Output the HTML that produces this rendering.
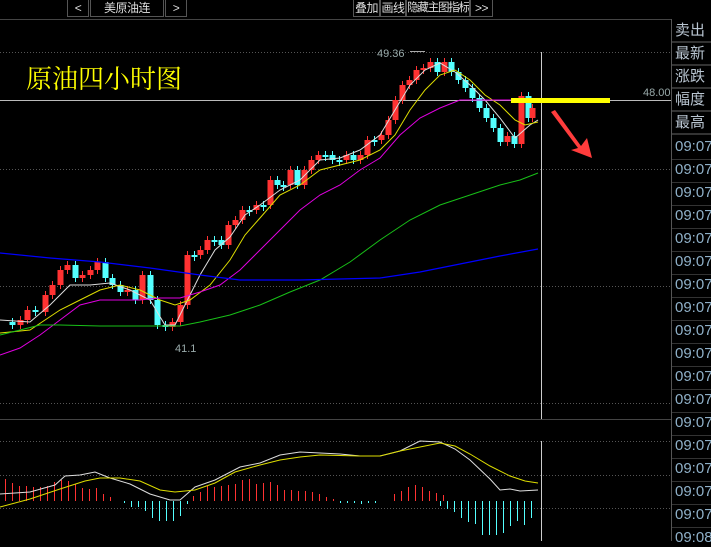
<!DOCTYPE html>
<html><head><meta charset="utf-8"><style>
body{margin:0;width:711px;height:541px;background:#000;overflow:hidden;position:relative;font-family:"Liberation Sans","Noto Sans CJK SC",sans-serif}
.btn{position:absolute;top:0;height:17px;border:1px solid #555;border-top:none;color:#ddd;font-size:12px;line-height:16px;text-align:center;box-sizing:border-box;white-space:nowrap;overflow:hidden;letter-spacing:-0.5px}
.lab{position:absolute;left:672px;width:39px;height:23px;border-bottom:2px solid #333;color:#b8c4d0;font-size:15px;line-height:22px;padding-left:3px;box-sizing:border-box}
.tm{position:absolute;left:675px;color:#8fb0c8;font-size:15px;line-height:18px}
</style></head><body>
<div class="btn" style="left:67px;width:22px">&lt;</div>
<div class="btn" style="left:90px;width:74px">美原油连</div>
<div class="btn" style="left:165px;width:22px">&gt;</div>
<div class="btn" style="left:353px;width:27px">叠加</div>
<div class="btn" style="left:380px;width:26px">画线</div>
<div class="btn" style="left:406px;width:64px;letter-spacing:-1.2px;font-size:11.5px">隐藏主图指标</div>
<div class="btn" style="left:470px;width:23px">&gt;&gt;</div>
<div style="position:absolute;left:0;top:19px;width:672px;height:1px;background:#444"></div>
<div style="position:absolute;left:671px;top:19px;width:1px;height:522px;background:#555"></div>
<div style="position:absolute;left:26px;top:61px;color:#ffff00;font-size:26px;font-family:'Noto Serif CJK SC','Noto Sans CJK SC',serif;line-height:34px">原油四小时图</div>
<div class="lab" style="top:20px">卖出</div>
<div class="lab" style="top:43px">最新</div>
<div class="lab" style="top:66px">涨跌</div>
<div class="lab" style="top:89px">幅度</div>
<div class="lab" style="top:112px">最高</div>
<div id="tms"></div>
<svg width="711" height="541" style="position:absolute;left:0;top:0" id="s"></svg>
<script>
var s=document.getElementById('s'),h='';
function L(x1,y1,x2,y2,c,w,d){h+='<line x1="'+x1+'" y1="'+y1+'" x2="'+x2+'" y2="'+y2+'" stroke="'+c+'" stroke-width="'+(w||1)+'"'+(d?' stroke-dasharray="1,2"':'')+'/>';}
[52,169,286,403,441,475,508].forEach(function(y){L(0,y+.5,671,y+.5,'#555',1,1)});
L(0,419.5,671,419.5,'#444');
L(0,100.5,671,100.5,'#bbb');
L(541.5,52,541.5,419,'#ccc');L(541.5,441,541.5,541,'#ccc');
var tt='';for(var i=0;i<18;i++){var y=138+i*23;tt+='<div class="tm" style="top:'+y+'px">'+(i==17?'09:08':'09:07')+'</div>';L(672,y+21.5,711,y+21.5,'#333');}
document.getElementById('tms').innerHTML=tt;
var c=[[5,322],[12,325],[20,320],[27,310],[35,312],[45,295],[52,285],[60,270],[67,265],[75,278],[82,275],[90,270],[97,262],[105,278],[112,285],[120,292],[127,290],[135,300],[142,275],[150,300],[157,325],[165,327],[172,322],[180,305],[187,255],[194,255],[200,250],[207,240],[214,240],[221,245],[228,225],[235,220],[242,210],[249,210],[256,205],[263,205],[270,180],[277,185],[283,185],[290,170],[297,185],[304,170],[311,160],[318,155],[325,155],[332,160],[339,160],[346,155],[353,160],[360,155],[367,140],[374,140],[381,135],[388,120],[395,100],[402,85],[409,80],[416,70],[423,68],[430,62],[437,72],[444,62],[451,72],[458,80],[465,88],[472,98],[479,108],[486,118],[493,128],[500,142],[507,136],[514,144],[521,96],[528,118],[532,108]];
for(i=1;i<c.length;i++){var x=c[i][0],o=c[i-1][1],cl=c[i][1],up=cl<o,col=up?'#ff3232':'#54ffff';var t=Math.min(o,cl),b=Math.max(o,cl);if(b-t<2)b=t+2;L(x+.5,t-4,x+.5,b+4,col);h+='<rect x="'+(x-2.5)+'" y="'+t+'" width="6" height="'+(b-t)+'" fill="'+(col)+'"/>';}
function P(pts,col,w){h+='<polyline fill="none" stroke="'+col+'" stroke-width="'+(w||1)+'" points="'+pts+'"/>';}
P('0,320 30,322 50,305 70,285 90,285 110,283 130,290 150,300 165,325 175,325 190,295 200,275 215,250 230,237 245,215 260,205 280,190 300,180 320,160 340,158 360,150 380,135 395,110 410,85 425,70 440,63 455,72 470,85 485,100 500,118 515,138 530,125 538,120','#ddd');
P('0,333 30,330 60,310 80,300 100,290 120,285 140,290 160,300 175,305 190,300 210,285 230,260 245,235 260,218 280,195 300,185 320,170 340,165 360,160 380,150 395,135 410,110 425,90 440,75 455,70 470,80 485,95 500,105 515,120 525,125 538,122','#dddd00');
P('0,355 20,348 40,335 60,320 80,305 100,300 120,300 140,300 160,298 180,298 200,292 220,285 240,270 260,250 280,230 300,210 320,195 340,185 360,170 380,158 400,135 420,118 440,108 460,100 480,100 500,100 520,100','#e000e0');
P('0,335 20,330 40,325 60,325 100,326 150,326 180,326 200,322 230,315 260,305 290,292 320,280 350,262 380,240 410,220 440,205 470,195 500,185 520,180 538,173','#18c018');
P('0,253 50,258 100,262 150,268 200,275 240,280 300,280 340,279 380,278 420,272 460,264 500,256 538,249','#0000ff',1.2);
h+='<text x="377" y="57" fill="#9aa" font-size="11" font-family="Liberation Sans">49.36</text>';L(410,51.5,425,51.5,'#aaa');
h+='<text x="175" y="352" fill="#9aa" font-size="11" font-family="Liberation Sans">41.1</text>';
h+='<text x="643" y="96" fill="#9aa" font-size="11" font-family="Liberation Sans">48.00</text>';
h+='<rect x="511" y="98" width="99" height="5" fill="#ffff00"/>';
h+='<polygon points="551,112 555,110 581,146 587,138 592,158 571,150 578,148" fill="#ff3c3c"/>';
var red=[[5,479],[12,483],[19,486],[26,486],[33,487],[40,487],[47,486],[54,482],[61,480],[68,481],[75,484],[82,488],[89,489],[96,488],[103,494],[110,497],[193,496],[200,492],[207,486],[214,487],[221,486],[228,485],[235,484],[242,480],[249,479],[256,484],[263,483],[270,482],[277,485],[284,490],[291,490],[298,491],[305,491],[312,492],[319,494],[326,497],[333,499],[394,494],[401,491],[408,487],[415,485],[422,487],[429,491],[436,493],[443,495]];
red.forEach(function(r){L(r[0]+.5,r[1],r[0]+.5,501,'#ff3232')});
var cy=[[124,503],[131,507],[138,507],[145,511],[152,518],[159,521],[166,521],[173,521],[180,516],[187,504],[340,503],[347,503],[354,503],[361,504],[368,503],[375,503],[440,506],[447,509],[454,512],[461,518],[468,522],[475,524],[482,535],[489,535],[496,535],[503,533],[510,526],[517,521],[524,525],[531,518]];
cy.forEach(function(r){L(r[0]+.5,501,r[0]+.5,r[1],'#54ffff')});
P('0,494 30,492 55,485 65,476 80,475 95,472 110,478 130,484 150,494 170,500 180,500 195,487 215,480 240,467 260,463 280,455 300,452 320,453 340,454 360,456 380,456 400,451 420,441 440,442 455,449 470,460 490,479 500,490 510,489 520,491 538,490','#ddd');
P('0,507 30,499 60,489 85,481 100,478 120,478 140,481 160,490 175,492 195,490 215,483 235,472 260,465 280,460 300,457 320,455 360,456 380,456 400,451 420,447 440,443 455,446 470,454 490,466 510,476 525,481 538,483','#dddd00');
s.innerHTML=h;
</script>
</body></html>
